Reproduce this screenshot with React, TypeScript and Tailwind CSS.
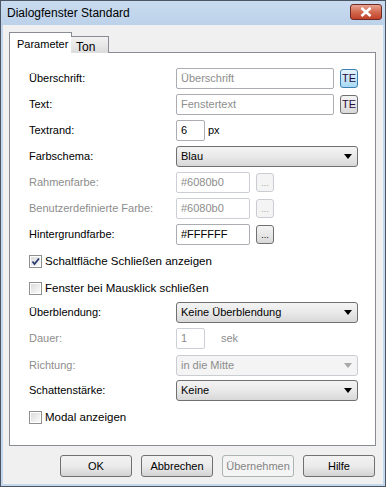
import React from "react";

const font = { fontFamily: '"Liberation Sans", Arial, sans-serif' };

const Label = ({ text, disabled }: { text: string; disabled?: boolean }) => (
  <p className={`w-[147px] shrink-0 ${disabled ? "text-[#8d8d8d]" : "text-black"}`}>{text}</p>
);

const TextBox = ({
  value,
  w,
  disabled,
  muted,
}: {
  value: string;
  w: string;
  disabled?: boolean;
  muted?: boolean;
}) => (
  <div
    className={`${w} h-[21px] flex items-center px-[4px] rounded-[2px] border ${
      disabled ? "border-[#ccd0d6] bg-white text-[#8d8d8d]" : "border-[#abadb3] bg-white"
    } ${muted ? "text-[#8d8d8d]" : ""}`}
  >
    {value}
  </div>
);

const Arrow = ({ disabled }: { disabled?: boolean }) => (
  <svg width="8" height="5" viewBox="0 0 8 5" className="ml-auto">
    <path d="M0 0H8L4 5Z" fill={disabled ? "#a8a8a8" : "#000"} />
  </svg>
);

const Select = ({ value, disabled }: { value: string; disabled?: boolean }) => (
  <div
    className={`w-[182px] h-[21px] flex items-center pl-[4px] pr-[5px] rounded-[3px] border ${
      disabled
        ? "border-[#c9ccd0] bg-[#f4f4f4] text-[#8d8d8d]"
        : "border-[#707070] bg-gradient-to-b from-[#f4f4f4] via-[#e9e9e9] to-[#d8d8d8]"
    }`}
  >
    <span>{value}</span>
    <Arrow disabled={disabled} />
  </div>
);

const DotsButton = ({ disabled }: { disabled?: boolean }) => (
  <div
    className={`ml-[6px] w-[18px] h-[19px] flex items-end justify-center pb-[3px] rounded-[3px] border text-[9px] leading-none ${
      disabled
        ? "border-[#c9ccd0] bg-[#f4f4f4] text-[#a0a0a0]"
        : "border-[#707070] bg-gradient-to-b from-[#f4f4f4] to-[#d9d9d9] text-black"
    }`}
  >
    ...
  </div>
);

const TeButton = ({ hot }: { hot?: boolean }) => (
  <div
    className={`ml-[6px] w-[18px] h-[19px] flex items-center justify-center rounded-[3px] border text-[11px] text-[#2b0a3d] ${
      hot
        ? "border-[#3c7fb1] bg-gradient-to-b from-[#e5f4fc] to-[#a7d9f5]"
        : "border-[#707070] bg-gradient-to-b from-[#f4f4f4] to-[#d9d9d9]"
    }`}
  >
    TE
  </div>
);

const Check = ({ checked, text }: { checked?: boolean; text: string }) => (
  <div className="flex items-center h-[21px]">
    <div className="w-[13px] h-[13px] border border-[#8e8f8f] bg-white p-[1px]">
      <div className="w-full h-full bg-gradient-to-br from-[#dcdcdc] to-[#fafafa] relative">
        {checked && (
          <svg width="11" height="11" viewBox="0 0 11 11" className="absolute -left-[1px] -top-[1px]">
            <path d="M2.5 5.5L4.5 8L9 2.5" stroke="#2a3e74" strokeWidth="1.8" fill="none" />
          </svg>
        )}
      </div>
    </div>
    <span className="ml-[3px] text-[11.5px]">{text}</span>
  </div>
);

const DlgButton = ({ text, disabled }: { text: string; disabled?: boolean }) => (
  <div
    className={`w-[72px] h-[22px] flex items-center justify-center rounded-[3px] border ${
      disabled
        ? "border-[#adb2b5] bg-[#f4f4f4] text-[#838383]"
        : "border-[#707070] bg-gradient-to-b from-[#f2f2f2] via-[#ebebeb] to-[#d3d3d3]"
    }`}
  >
    {text}
  </div>
);

export default function App() {
  return (
    <div
      className="w-[386px] h-[487px] flex flex-col border border-[#4b5563] bg-[#c3d7ed] text-[11px] text-black"
      style={font}
    >
      <div className="h-[24px] shrink-0 flex items-center pl-[6px] pr-[3px] bg-gradient-to-b from-[#c9dbef] to-[#bcd2ea]">
        <span className="text-[12px] text-black">Dialogfenster Standard</span>
        <div className="ml-auto mb-[2px] w-[32px] h-[16px] flex items-center justify-center rounded-[3px] border border-[#6e2b23] bg-gradient-to-b from-[#e8a493] via-[#d2694f] to-[#c2402a]">
          <svg width="12" height="10" viewBox="0 0 12 10">
            <path d="M1.5 1L10.5 9M10.5 1L1.5 9" stroke="#fff" strokeWidth="2.6" />
            <path d="M1.5 1L10.5 9M10.5 1L1.5 9" stroke="#fff" strokeWidth="1.4" />
          </svg>
        </div>
      </div>

      <div className="flex-1 mx-[2px] mb-[2px] bg-[#f0f0f0] flex flex-col">
        <div className="flex items-end pl-[6px] mt-[7px] h-[21px] relative z-10">
          <div className="h-[21px] w-[63px] pl-[7px] pt-[3px] bg-white border border-b-0 border-[#898c95] text-[11px]">
            Parameter
          </div>
          <div className="h-[17px] w-[38px] pl-[5px] pt-[1px] -ml-[1px] bg-gradient-to-b from-[#f3f3f3] to-[#dcdcdc] border border-b-0 border-l-0 border-[#898c95] text-[12px]">
            Ton
          </div>
        </div>

        <div className="ml-[6px] -mt-[1px] w-[367px] h-[394px] bg-white border border-[#898c95] pl-[19px] pt-[15px] flex flex-col">
          <div className="flex items-center h-[21px]">
            <Label text="Überschrift:" />
            <TextBox value="Überschrift" w="w-[158px]" muted />
            <TeButton hot />
          </div>
          <div className="flex items-center h-[21px] mt-[5px]">
            <Label text="Text:" />
            <TextBox value="Fenstertext" w="w-[158px]" muted />
            <TeButton />
          </div>
          <div className="flex items-center h-[21px] mt-[5px]">
            <Label text="Textrand:" />
            <TextBox value="6" w="w-[29px]" />
            <span className="ml-[3px]">px</span>
          </div>
          <div className="flex items-center h-[21px] mt-[5px]">
            <Label text="Farbschema:" />
            <Select value="Blau" />
          </div>
          <div className="flex items-center h-[21px] mt-[5px]">
            <Label text="Rahmenfarbe:" disabled />
            <TextBox value="#6080b0" w="w-[74px]" disabled />
            <DotsButton disabled />
          </div>
          <div className="flex items-center h-[21px] mt-[5px]">
            <Label text="Benutzerdefinierte Farbe:" disabled />
            <TextBox value="#6080b0" w="w-[74px]" disabled />
            <DotsButton disabled />
          </div>
          <div className="flex items-center h-[21px] mt-[5px]">
            <Label text="Hintergrundfarbe:" />
            <TextBox value="#FFFFFF" w="w-[74px]" />
            <DotsButton />
          </div>
          <div className="mt-[6px]">
            <Check checked text="Schaltfläche Schließen anzeigen" />
          </div>
          <div className="mt-[6px]">
            <Check text="Fenster bei Mausklick schließen" />
          </div>
          <div className="flex items-center h-[21px] mt-[3px]">
            <Label text="Überblendung:" />
            <Select value="Keine Überblendung" />
          </div>
          <div className="flex items-center h-[21px] mt-[5px]">
            <Label text="Dauer:" disabled />
            <TextBox value="1" w="w-[29px]" disabled />
            <span className="ml-[16px] text-[#8d8d8d]">sek</span>
          </div>
          <div className="flex items-center h-[21px] mt-[6px]">
            <Label text="Richtung:" disabled />
            <Select value="in die Mitte" disabled />
          </div>
          <div className="flex items-center h-[21px] mt-[4px]">
            <Label text="Schattenstärke:" />
            <Select value="Keine" />
          </div>
          <div className="mt-[6px]">
            <Check text="Modal anzeigen" />
          </div>
        </div>

        <div className="flex gap-[9px] pl-[57px] mt-[9px]">
          <DlgButton text="OK" />
          <DlgButton text="Abbrechen" />
          <DlgButton text="Übernehmen" disabled />
          <DlgButton text="Hilfe" />
        </div>
      </div>
    </div>
  );
}
